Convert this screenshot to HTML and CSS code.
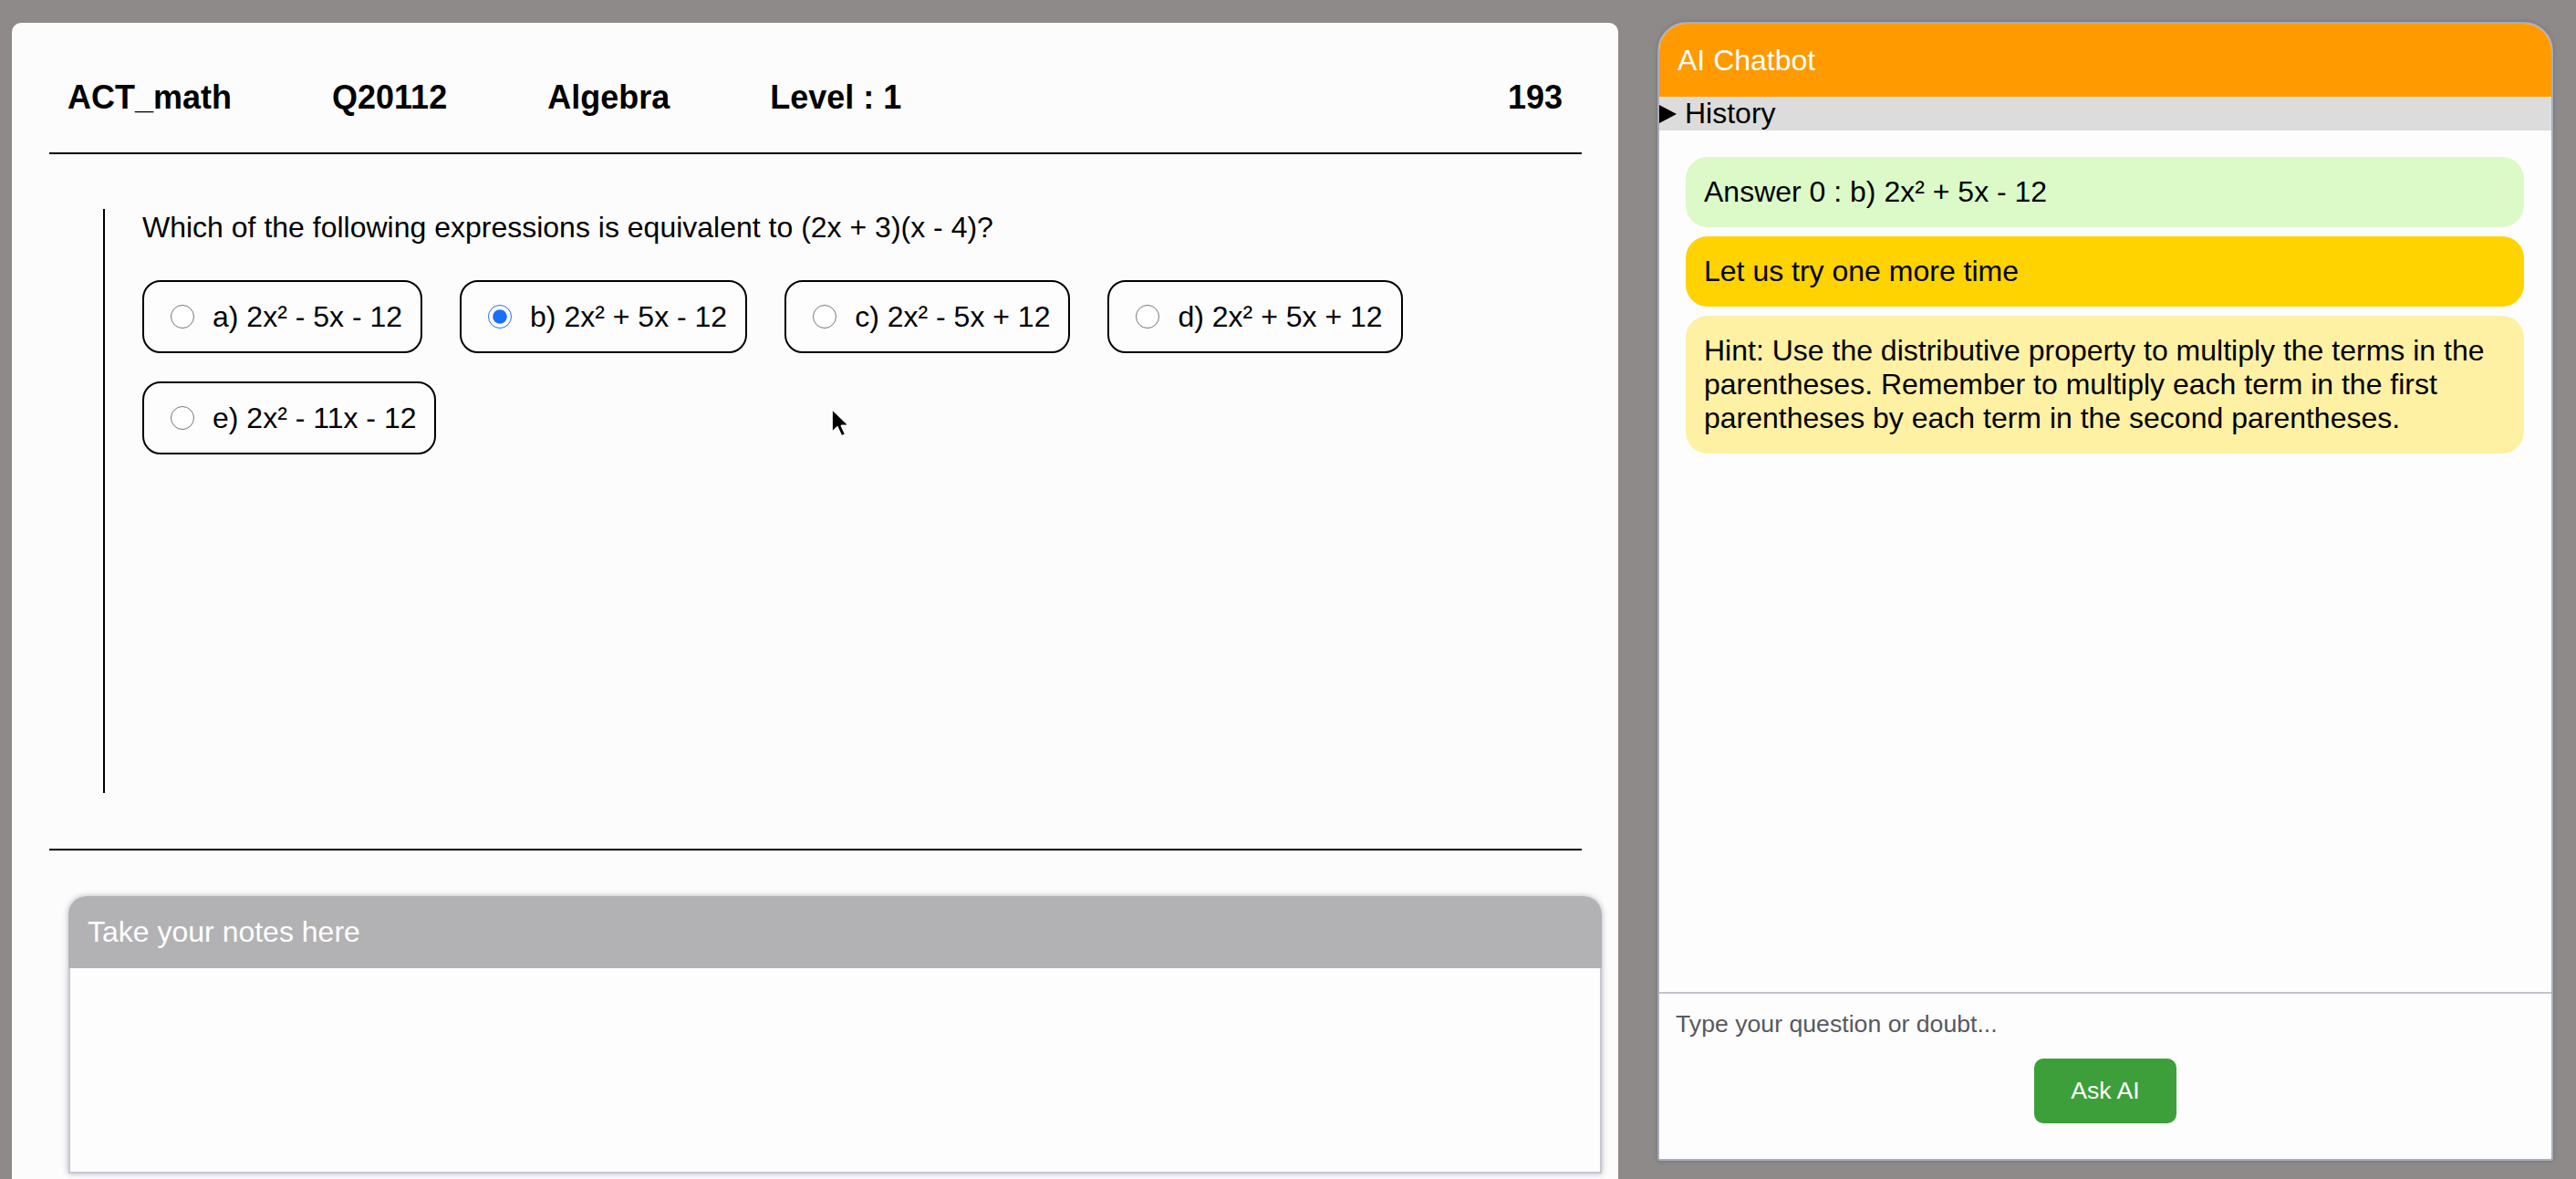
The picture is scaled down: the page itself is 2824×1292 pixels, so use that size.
FILE: index.html
```html
<!DOCTYPE html>
<html lang="en">
<head>
<meta charset="utf-8">
<title>ACT math practice</title>
<link rel="stylesheet" href="styles.css">
</head>
<body>
<div class="page">
  <main class="quiz-panel">
    <div class="quiz-header">
      <span class="meta">ACT_math</span>
      <span class="meta">Q20112</span>
      <span class="meta">Algebra</span>
      <span class="meta">Level : 1</span>
      <span class="meta count">193</span>
    </div>
    <div class="rule"></div>
    <section class="question">
      <p class="question-text">Which of the following expressions is equivalent to (2x + 3)(x - 4)?</p>
      <div class="options">
        <label class="option"><input type="radio" name="ans"><span>a) 2x² - 5x - 12</span></label>
        <label class="option"><input type="radio" name="ans" checked><span>b) 2x² + 5x - 12</span></label>
        <label class="option"><input type="radio" name="ans"><span>c) 2x² - 5x + 12</span></label>
        <label class="option"><input type="radio" name="ans"><span>d) 2x² + 5x + 12</span></label>
        <label class="option"><input type="radio" name="ans"><span>e) 2x² - 11x - 12</span></label>
      </div>
    </section>
    <div class="rule"></div>
    <div class="notes">
      <div class="notes-title">Take your notes here</div>
      <div class="notes-body"></div>
    </div>
  </main>

  <aside class="chat-panel">
    <div class="chat-header">AI Chatbot</div>
    <details class="history"><summary>History</summary></details>
    <div class="messages">
      <div class="bubble answer">Answer 0 : b) 2x² + 5x - 12</div>
      <div class="bubble retry">Let us try one more time</div>
      <div class="bubble hint">Hint: Use the distributive property to multiply the terms in the parentheses. Remember to multiply each term in the first parentheses by each term in the second parentheses.</div>
    </div>
    <div class="chat-input">
      <textarea class="ask-box" placeholder="Type your question or doubt..."></textarea>
      <button class="ask-btn" type="button">Ask AI</button>
    </div>
  </aside>
</div>
<svg class="cursor" width="24" height="36" viewBox="0 0 24 36" aria-hidden="true">
  <path d="M2 2 L2 28 L8 22 L12.5 32 L17 30 L12.5 20.5 L21 20.5 Z" fill="#000" stroke="#fff" stroke-width="1.8" stroke-linejoin="round"/>
</svg>
</body>
</html>
```

FILE: styles.css
```css
html, body {
  margin: 0;
  padding: 0;
}
body {
  width: 2824px;
  height: 1292px;
  overflow: hidden;
  background: #8e8a8a;
  font-family: "Liberation Sans", Arial, Helvetica, sans-serif;
  color: #000;
  position: relative;
}
.page {
  display: flex;
  align-items: flex-start;
  padding-top: 24px;
}

/* ---------- left quiz panel ---------- */
.quiz-panel {
  box-sizing: border-box;
  margin-left: 13px;
  margin-top: 1px;
  width: 1761px;
  height: 1320px;
  background: #fcfcfc;
  border-radius: 10px;
  padding: 0 40px 0 41px;
}
.quiz-header {
  display: flex;
  align-items: center;
  gap: 110px;
  padding: 61px 21px 40px 20px;
  font-size: 36px;
  font-weight: bold;
  line-height: 41px;
}
.quiz-header .count {
  margin-left: auto;
}
.rule {
  height: 2px;
  background: #000;
}
.question {
  box-sizing: border-box;
  height: 640px;
  margin: 60px 0 61px 59px;
  border-left: 2px solid #000;
  padding: 2px 0 0 41px;
}
.question-text {
  margin: 0;
  font-size: 32px;
  line-height: 37px;
}
.options {
  display: flex;
  flex-wrap: wrap;
  column-gap: 41px;
  row-gap: 31px;
  margin-top: 39px;
}
.option {
  box-sizing: border-box;
  height: 80px;
  display: flex;
  align-items: center;
  gap: 20px;
  padding: 0 20px 0 29px;
  border: 2px solid #000;
  border-radius: 20px;
  font-size: 32px;
  line-height: 37px;
  background: #fdfdfd;
}
.option input {
  width: 26px;
  height: 26px;
  margin: 0;
  accent-color: #1a6ff5;
}

/* notes */
.notes {
  margin: 50px -22px 0 21px;
  border-radius: 20px 20px 0 0;
  box-shadow: 0 0 6px rgba(120, 120, 140, 0.55);
}
.notes-title {
  box-sizing: border-box;
  height: 79px;
  display: flex;
  align-items: center;
  padding: 0 21px;
  background: #b2b2b4;
  color: #fff;
  font-size: 32px;
  border-radius: 20px 20px 0 0;
}
.notes-body {
  box-sizing: border-box;
  height: 225px;
  background: #fdfdfd;
  border: 2px solid #c6c8d4;
  border-top: none;
}

/* ---------- right chat panel ---------- */
.chat-panel {
  box-sizing: border-box;
  margin-left: 43px;
  width: 982px;
  height: 1248px;
  display: flex;
  flex-direction: column;
  background: #fdfdfd;
  border: 2px solid #a9acbb;
  border-radius: 32px 32px 3px 3px;
  overflow: hidden;
  box-shadow: 0 0 4px rgba(60, 60, 70, 0.35);
}
.chat-header {
  box-sizing: border-box;
  height: 80px;
  display: flex;
  align-items: center;
  padding: 0 20px;
  background: #ff9a00;
  color: #fff;
  font-size: 32px;
}
.history {
  background: #dcdcdc;
}
.history summary {
  display: flex;
  align-items: center;
  gap: 9px;
  list-style: none;
  font-size: 32px;
  line-height: 37px;
  height: 37px;
  cursor: pointer;
}
.history summary::-webkit-details-marker {
  display: none;
}
.history summary::before {
  content: "";
  width: 0;
  height: 0;
  border-top: 10px solid transparent;
  border-bottom: 10px solid transparent;
  border-left: 19px solid #000;
}
.messages {
  flex: 1;
  display: flex;
  flex-direction: column;
  gap: 10px;
  padding: 29px 30px 0 29px;
}
.bubble {
  padding: 20px;
  border-radius: 24px;
  font-size: 32px;
  line-height: 37px;
}
.answer { background: #dcfac8; }
.retry { background: #ffd300; }
.hint { background: #fef1a4; }

.chat-input {
  height: 183px;
  display: flex;
  flex-direction: column;
  align-items: center;
}
.ask-box {
  box-sizing: border-box;
  align-self: stretch;
  height: 53px;
  padding: 18px 18px 0;
  border: none;
  border-top: 2px solid #c2c4cc;
  background: #fdfdfd;
  resize: none;
  outline: none;
  font-family: "Liberation Sans", Arial, sans-serif;
  font-size: 26.67px;
  line-height: 31px;
  overflow: hidden;
}
.ask-box::placeholder {
  color: #58585e;
}
.ask-btn {
  margin-top: 20px;
  width: 156px;
  height: 71px;
  border: none;
  border-radius: 10px;
  background: #3d9f3a;
  color: #fff;
  font-family: "Liberation Sans", Arial, sans-serif;
  font-size: 26.67px;
}

.cursor {
  position: absolute;
  left: 910px;
  top: 446px;
}
```
